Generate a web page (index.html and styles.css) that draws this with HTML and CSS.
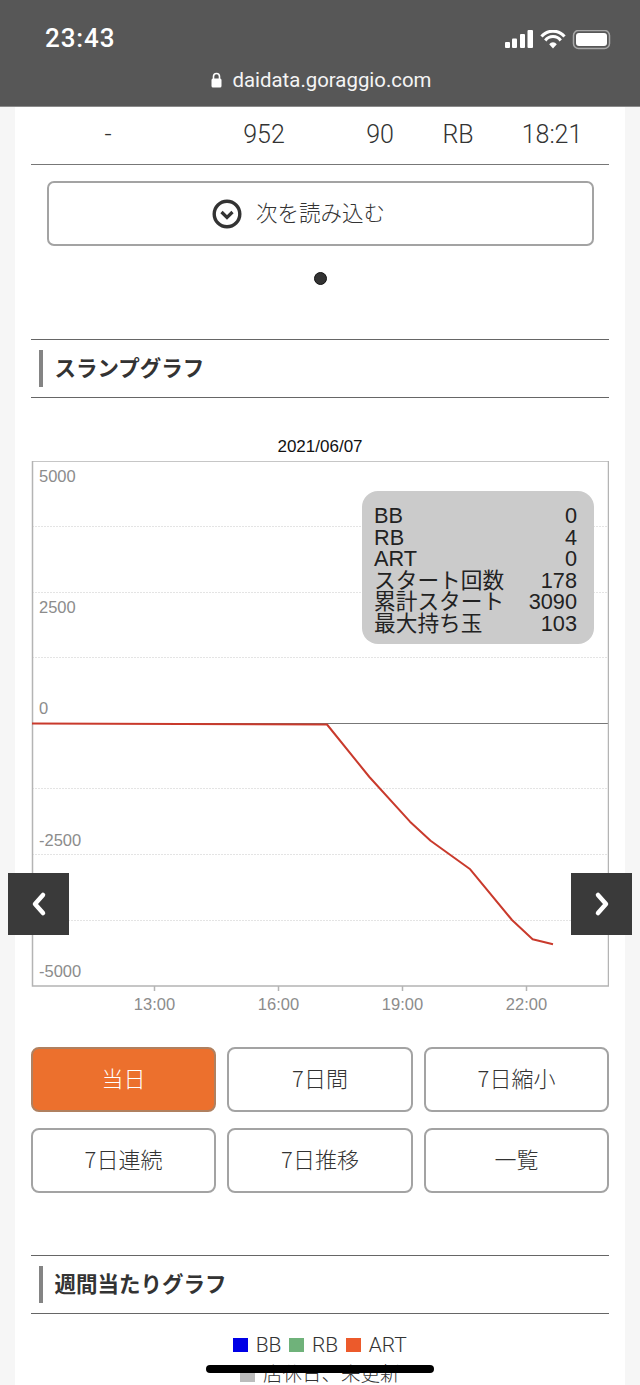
FILE: index.html
```html
<!DOCTYPE html>
<html lang="ja">
<head>
<meta charset="utf-8">
<title>スランプグラフ</title>
<link rel="stylesheet" href="styles.css">
</head>
<body>
<header class="topbar">
  <div class="status">
    <span class="time">23:43</span>
    <svg class="status-icons" width="106" height="20" viewBox="0 0 106 20">
      <rect x="0" y="12" width="5" height="6" rx="1" fill="#fff"/>
      <rect x="7" y="8.5" width="5" height="9.500" rx="1" fill="#fff"/>
      <rect x="15" y="4" width="5" height="14" rx="1" fill="#fff"/>
      <rect x="22.500" y="0" width="5.500" height="18" rx="1" fill="#fff"/>
      <path d="M36.500 6.500a15 15 0 0 1 23 0M40.300 10.500a9.500 9.500 0 0 1 15.400 0" fill="none" stroke="#fff" stroke-width="3"/>
      <path d="M44.200 14.200a4.800 4.800 0 0 1 7.600 0L48 18.500z" fill="#fff"/>
      <rect x="68.500" y="0.500" width="36" height="18" rx="5" fill="none" stroke="#a8a8a8" stroke-width="1.500"/>
      <rect x="71" y="3" width="31" height="13" rx="3" fill="#fff"/>
      <path d="M106 6.500c1.500.5 1.500 5.500 0 6z" fill="#a8a8a8"/>
    </svg>
  </div>
  <div class="url">
    <svg class="lock" width="11" height="16" viewBox="0 0 11 16">
      <path d="M2.500 7V4.500a3 3 0 0 1 6 0V7" fill="none" stroke="#fff" stroke-width="1.600"/>
      <rect x="0.500" y="6.500" width="10" height="9" rx="1.500" fill="#fff"/>
    </svg>
    <span>daidata.goraggio.com</span>
  </div>
</header>

<main class="sheet">
  <div class="data-row">
    <span>-</span><span>952</span><span>90</span><span>RB</span><span>18:21</span>
  </div>

  <button class="load-more">
    <svg width="30" height="30" viewBox="0 0 30 30">
      <circle cx="15" cy="15" r="12.800" fill="none" stroke="#333" stroke-width="3.400"/>
      <path d="M9.500 13l5.500 5.500 5.500-5.500" fill="none" stroke="#333" stroke-width="3.200"/>
    </svg>
    <span>次を読み込む</span>
  </button>

  <div class="dots"><span class="dot"></span></div>

  <h2 class="section-title first"><span>スランプグラフ</span></h2>

  <div class="chart-date">2021/06/07</div>

  <div class="chart">
    <svg class="chart-svg" width="578" height="555" viewBox="0 0 578 555">
      <g class="grid-dotted">
        <path d="M1 65.500H577M1 131.500H577M1 196.500H577M1 327.500H577M1 393.500H577M1 459.500H577"/>
      </g>
      <path d="M1 262.500H577" class="zero-line"/>
      <path d="M1.500 0H577.500V525H1.500Z" class="frame"/>
      <path d="M123.500 525v5M247.500 525v5M371.500 525v5M495.500 525v5" class="frame"/>
      <text class="axis" x="8" y="21">5000</text>
      <text class="axis" x="8" y="152">2500</text>
      <text class="axis" x="8" y="253">0</text>
      <text class="axis" x="8" y="385">-2500</text>
      <text class="axis" x="8" y="516">-5000</text>
      <text class="axis mid" x="123.500" y="549">13:00</text>
      <text class="axis mid" x="247.500" y="549">16:00</text>
      <text class="axis mid" x="371.500" y="549">19:00</text>
      <text class="axis mid" x="495.500" y="549">22:00</text>
      <path class="curve" d="M1 262.500L296 263.500L338.400 316L379 360.700L399.600 379.700L439.200 408.300L481 459L501.600 478.300L522 483.300"/>
    </svg>

    <dl class="tip">
      <dt>BB</dt><dd>0</dd>
      <dt>RB</dt><dd>4</dd>
      <dt>ART</dt><dd>0</dd>
      <dt>スタート回数</dt><dd>178</dd>
      <dt>累計スタート</dt><dd>3090</dd>
      <dt>最大持ち玉</dt><dd>103</dd>
    </dl>

    <button class="nav prev" aria-label="前へ">
      <svg width="18" height="26" viewBox="0 0 18 26"><path d="M13 4l-8 9 8 9" fill="none" stroke="#fff" stroke-width="4.500" stroke-linecap="round" stroke-linejoin="round"/></svg>
    </button>
    <button class="nav next" aria-label="次へ">
      <svg width="18" height="26" viewBox="0 0 18 26"><path d="M5 4l8 9-8 9" fill="none" stroke="#fff" stroke-width="4.500" stroke-linecap="round" stroke-linejoin="round"/></svg>
    </button>
  </div>

  <div class="tabs">
    <button class="tab active">当日</button>
    <button class="tab">7日間</button>
    <button class="tab">7日縮小</button>
    <button class="tab">7日連続</button>
    <button class="tab">7日推移</button>
    <button class="tab">一覧</button>
  </div>

  <h2 class="section-title second"><span>週間当たりグラフ</span></h2>

  <div class="legend">
    <span class="swatch bb"></span><span class="legend-label">BB</span>
    <span class="swatch rb"></span><span class="legend-label">RB</span>
    <span class="swatch art"></span><span class="legend-label">ART</span>
  </div>
  <div class="legend closed">
    <span class="swatch off"></span><span class="legend-label">店休日、未更新</span>
  </div>
</main>

<div class="home-bar"></div>
</body>
</html>
```

FILE: styles.css
```css
* { box-sizing: border-box; }

html, body {
  margin: 0;
  padding: 0;
  height: 1385px;
  overflow: hidden;
  background: #f6f6f6;
  font-family: "Roboto", "Noto Sans CJK JP", sans-serif;
  color: #333;
}

.topbar {
  height: 107px;
  background: #575757;
  border-bottom: 1px solid #8a8a8a;
  color: #fff;
  display: flex;
  flex-direction: column;
}

.status {
  height: 66px;
  padding: 10px 29px 0 45px;
  display: flex;
  align-items: center;
  justify-content: space-between;
}

.time {
  font-size: 26px;
  font-weight: 500;
  letter-spacing: 0.9px;
  line-height: 26px;
}

.status-icons { display: block; margin-top: 3px; }

.url {
  display: flex;
  justify-content: center;
  align-items: center;
  gap: 10px;
  padding-left: 3px;
  font-size: 20.400px;
  font-weight: 400;
  line-height: 28px;
  color: #f4f4f4;
}

.lock { display: block; }

.sheet {
  width: 610px;
  height: 1278px;
  margin: 0 15px;
  padding: 0 16px;
  background: #fff;
  position: relative;
}

.data-row {
  height: 58px;
  border-bottom: 1px solid #777;
  display: grid;
  grid-template-columns: 154px 158px 74px 82px 106px;
  align-items: center;
  text-align: center;
  font-size: 25px;
  font-weight: 300;
  padding-bottom: 2px;
}

.load-more {
  display: flex;
  align-items: center;
  justify-content: center;
  gap: 14px;
  width: 547px;
  height: 65px;
  margin: 16px 0 0 16px;
  background: #fff;
  border: 2px solid #a3a3a3;
  border-radius: 7px;
  font: 300 21.500px "Noto Sans CJK JP", sans-serif;
  color: #333;
  padding: 0 44px 5px 0;
}

.load-more svg { display: block; margin-top: 5px; }

.dots {
  display: flex;
  justify-content: center;
  padding-top: 26px;
}

.dot {
  width: 13px;
  height: 13px;
  border-radius: 50%;
  background: #333;
  border: 1px solid #111;
}

.section-title {
  margin: 0;
  height: 59px;
  border-top: 1px solid #666;
  border-bottom: 1px solid #666;
  display: flex;
  align-items: center;
  font: 700 21.500px "Noto Sans CJK JP", sans-serif;
  color: #333;
  padding-left: 8px;
}

.section-title span {
  display: block;
  height: 37px;
  line-height: 33px;
  border-left: 4.500px solid #848484;
  padding-left: 11.500px;
}

.section-title.first { margin-top: 54px; }
.section-title.second { margin-top: 62px; }

.chart-date {
  margin-top: 36px;
  height: 27px;
  text-align: center;
  font: 400 17px/26px "Liberation Sans", sans-serif;
  color: #111;
}

.chart {
  position: relative;
  height: 559px;
}

.chart-svg { display: block; }

.grid-dotted path {
  fill: none;
  stroke: #e4e4e4;
  stroke-width: 1;
  stroke-dasharray: 2 1;
}

.zero-line { fill: none; stroke: #777; stroke-width: 1; }
.frame { fill: none; stroke: #b4b4b4; stroke-width: 1.500; }

.axis {
  font: 400 16.500px "Liberation Sans", sans-serif;
  fill: #8c8c8c;
}

.mid { text-anchor: middle; }

.curve {
  fill: none;
  stroke: #c93a2c;
  stroke-width: 2;
  stroke-linejoin: round;
}

.tip {
  position: absolute;
  left: 331px;
  top: 30px;
  width: 232px;
  height: 153px;
  margin: 0;
  padding: 14px 17px 0 12px;
  border-radius: 16px;
  background: #cbcbcb;
  display: grid;
  grid-template-columns: auto auto;
  grid-auto-rows: 21.500px;
  justify-content: space-between;
  font: 400 21.700px/21.500px "Liberation Sans", "Noto Sans CJK JP", sans-serif;
  color: #222;
}

.tip dt, .tip dd { margin: 0; }
.tip dd { text-align: right; }

.nav {
  position: absolute;
  top: 412px;
  width: 61px;
  height: 62px;
  padding: 0;
  border: 0;
  background: #3a3a3a;
  display: flex;
  align-items: center;
  justify-content: center;
}

.nav svg { display: block; }
.prev { left: -23px; }
.next { right: -23px; }

.tabs {
  margin-top: 27px;
  display: grid;
  grid-template-columns: 185px 186px 185px;
  column-gap: 11px;
  row-gap: 16px;
}

.tab {
  height: 65px;
  background: #fff;
  border: 2px solid #a3a3a3;
  border-radius: 8px;
  font: 300 22px "Noto Sans CJK JP", sans-serif;
  color: #333;
  padding: 0 0 5px;
}

.tab.active {
  background: #ec702d;
  border-color: #b0805f;
  color: #fff;
}

.legend {
  display: flex;
  align-items: center;
  justify-content: center;
  margin-top: 16px;
  height: 30px;
  font: 300 21px/30px "Roboto", "Noto Sans CJK JP", sans-serif;
  color: #333;
}

.legend.closed {
  margin-top: 0;
  font-size: 19.500px;
  line-height: 28px;
}

.swatch {
  width: 14.500px;
  height: 14.500px;
  margin-right: 8px;
}

.legend-label { margin-right: 8px; }
.legend-label:last-child { margin-right: 0; }

.bb { background: #0000e6; }
.rb { background: #6fb27a; }
.art { background: #ec5a2b; }
.off { background: #bcbcbc; }

.home-bar {
  position: absolute;
  left: 206px;
  top: 1365px;
  width: 228px;
  height: 8px;
  border-radius: 4px;
  background: #000;
}
```
